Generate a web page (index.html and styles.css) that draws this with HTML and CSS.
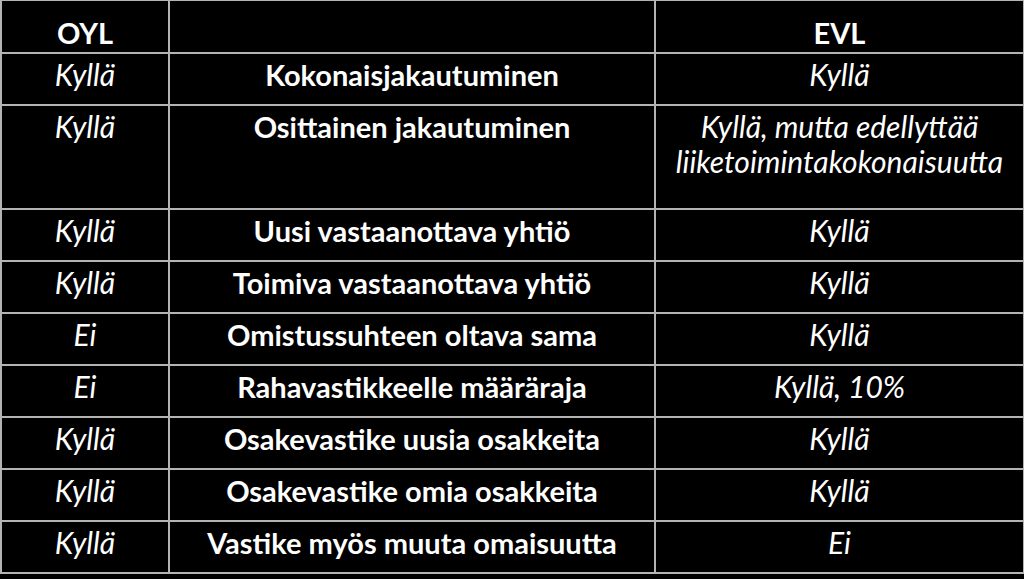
FILE: index.html
```html
<!DOCTYPE html>
<html lang="fi">
<head>
<meta charset="utf-8">
<link rel="stylesheet" href="styles.css">
</head>
<body>
<table class="cmp">
  <colgroup><col class="c1"><col class="c2"><col class="c3"></colgroup>
  <thead>
    <tr class="head"><th>OYL</th><th></th><th>EVL</th></tr>
  </thead>
  <tbody>
    <tr><td class="v">Kyllä</td><td class="k">Kokonaisjakautuminen</td><td class="v">Kyllä</td></tr>
    <tr class="tall"><td class="v">Kyllä</td><td class="k">Osittainen jakautuminen</td><td class="v">Kyllä, mutta edellyttää<br>liiketoimintakokonaisuutta</td></tr>
    <tr><td class="v">Kyllä</td><td class="k">Uusi vastaanottava yhtiö</td><td class="v">Kyllä</td></tr>
    <tr><td class="v">Kyllä</td><td class="k">Toimiva vastaanottava yhtiö</td><td class="v">Kyllä</td></tr>
    <tr><td class="v">Ei</td><td class="k">Omistussuhteen oltava sama</td><td class="v">Kyllä</td></tr>
    <tr><td class="v">Ei</td><td class="k">Rahavastikkeelle määräraja</td><td class="v">Kyllä, 10%</td></tr>
    <tr><td class="v">Kyllä</td><td class="k">Osakevastike uusia osakkeita</td><td class="v">Kyllä</td></tr>
    <tr><td class="v">Kyllä</td><td class="k">Osakevastike omia osakkeita</td><td class="v">Kyllä</td></tr>
    <tr><td class="v">Kyllä</td><td class="k">Vastike myös muuta omaisuutta</td><td class="v">Ei</td></tr>
  </tbody>
</table>
</body>
</html>
```
FILE: styles.css
```css
html, body {
  margin: 0;
  padding: 0;
  background: #000;
  width: 1024px;
  height: 579px;
  overflow: hidden;
}
.cmp {
  border-collapse: collapse;
  table-layout: fixed;
  width: 1023px;
  margin: -1px 0 0 0;
  font-family: Lato, "Open Sans", sans-serif;
  color: #fff;
  font-size: 29px;
  line-height: 35px;
}
.c1 { width: 168px; }
.c2 { width: 486px; }
.c3 { width: 369px; }
.cmp th, .cmp td {
  border: 2px solid #b4b4b4;
  text-align: center;
  vertical-align: top;
  padding: 3px 0 0 0;
  height: 46px;
  box-sizing: border-box;
  white-space: nowrap;
}
.cmp tr { height: 52px; }
.cmp tr.tall { height: 104px; }
.cmp .head { height: 53px; }
.cmp th {
  font-weight: 700;
  padding-top: 14px;
  font-size: 29px;
}
.k { font-weight: 700; }
.v { font-style: italic; font-size: 30px; }
```
